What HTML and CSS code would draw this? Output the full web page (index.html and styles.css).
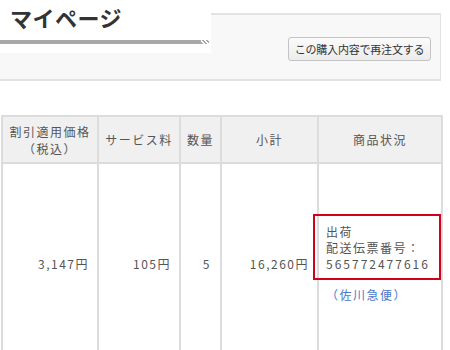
FILE: index.html
```html
<!DOCTYPE html>
<html lang="ja">
<head>
<meta charset="utf-8">
<link rel="stylesheet" href="styles.css">
</head>
<body>
<div class="top">
  <div class="tab">
    <h1 class="title">マイページ</h1>
    <div class="tab-bar"><span class="bar-line"></span><span class="bar-tip"></span></div>
  </div>
  <div class="panel">
    <button class="reorder">この購入内容で再注文する</button>
  </div>
</div>
<table class="orders">
  <thead>
    <tr>
      <th class="c1">割引適用価格<br>（税込）</th>
      <th class="c2">サービス料</th>
      <th class="c3">数量</th>
      <th class="c4">小計</th>
      <th class="c5">商品状況</th>
    </tr>
  </thead>
  <tbody>
    <tr>
      <td class="num">3,147円</td>
      <td class="num">105円</td>
      <td class="num qty">5</td>
      <td class="num">16,260円</td>
      <td class="status">
        <div class="ship">
          <div>出荷</div>
          <div>配送伝票番号：</div>
          <div class="track">565772477616</div>
          <span class="mark"></span>
        </div>
        <div class="carrier">（佐川急便）</div>
      </td>
    </tr>
  </tbody>
</table>
</body>
</html>
```
FILE: styles.css
```css
html, body {
  margin: 0;
  padding: 0;
  background: #ffffff;
  width: 450px;
  height: 350px;
  overflow: hidden;
  font-family: "Noto Sans CJK JP", "Noto Sans", sans-serif;
  color: #555;
}
.top {
  position: relative;
  height: 115px;
}
.tab {
  position: absolute;
  left: 0;
  top: 0;
  width: 211px;
  height: 53px;
  background: #fff;
  z-index: 2;
}
.title {
  margin: 0;
  padding: 2px 0 0 10px;
  font-size: 22px;
  line-height: 30px;
  font-weight: bold;
  color: #333;
  letter-spacing: 0.5px;
}
.tab-bar {
  display: flex;
  margin-top: 8px;
  height: 4px;
}
.bar-line {
  width: 201px;
  height: 4px;
  background: #a8a8a8;
}
.bar-tip {
  width: 8px;
  height: 4px;
  background: repeating-linear-gradient(45deg, #a8a8a8 0 1.5px, transparent 1.5px 3px);
}
.panel {
  position: absolute;
  left: 0;
  top: 13px;
  width: 440px;
  height: 64px;
  background: #f8f8f8;
  border-top: 2px solid #e2e2e2;
  border-bottom: 2px solid #e2e2e2;
  border-right: 1px solid #e2e2e2;
  display: flex;
  justify-content: flex-end;
  align-items: flex-start;
}
.reorder {
  margin: 22px 9px 0 0;
  height: 24px;
  width: 143px;
  padding: 0;
  white-space: nowrap;
  font-family: "Noto Sans CJK JP", sans-serif;
  font-size: 11px;
  letter-spacing: -0.2px;
  color: #333;
  background: linear-gradient(#fbfbfb, #ececec);
  border: 1px solid #c4c4c4;
  border-radius: 3px;
}
.orders {
  margin-left: 1px;
  width: 442px;
  border-collapse: collapse;
  font-size: 12px;
  letter-spacing: 1.5px;
}
.orders th, .orders td {
  border: 2px solid #dcdcdc;
  padding: 0;
}
.orders th {
  background: #f0f0f0;
  font-weight: normal;
  color: #555;
  height: 45px;
  line-height: 17px;
  text-align: center;
}
.c1 { width: 94px; }
.c2 { width: 80px; }
.c3 { width: 39px; }
.c4 { width: 95px; }
.orders td {
  height: 198px;
  vertical-align: middle;
}
.num {
  text-align: right;
  padding-right: 8px !important;
  letter-spacing: 1.5px;
}
.qty {
  padding-right: 9px !important;
}
.status {
  text-align: left;
  padding-left: 7px !important;
  line-height: 16px;
}
.ship {
  position: relative;
}
.track {
  letter-spacing: 2px;
}
.mark {
  position: absolute;
  left: -13px;
  top: -10px;
  width: 124px;
  height: 62px;
  border: 2px solid #d0011b;
}
.carrier {
  margin-top: 15px;
  color: #4a78c8;
}
```
